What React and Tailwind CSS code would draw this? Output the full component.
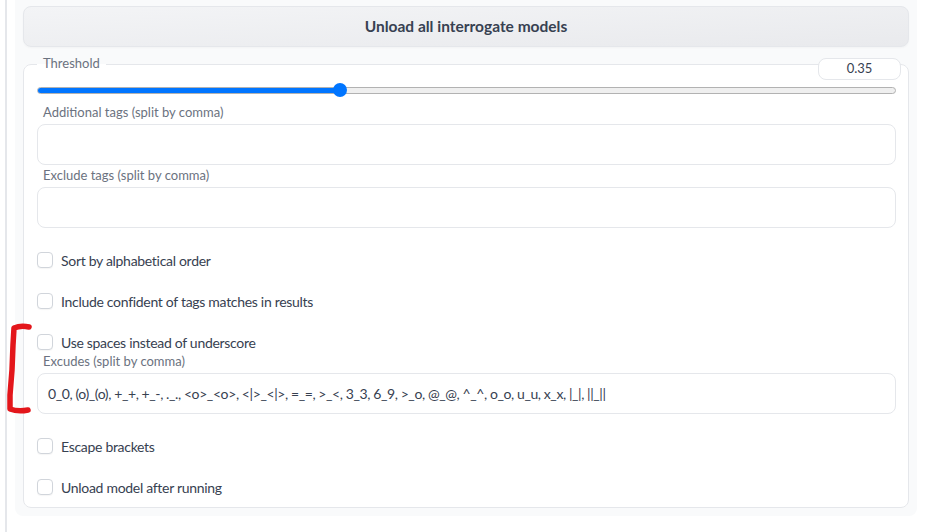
import { useState } from 'react';

const font = { fontFamily: 'Lato, "Noto Sans", sans-serif' };

const Checkbox = ({ label, checked, onChange, className = '' }) => (
    <label className={`flex items-center gap-2 h-[20px] cursor-pointer ${className}`}>
        <span
            onClick={onChange}
            className={`w-4 h-4 rounded-[4px] border flex-none shadow-[0_1px_1px_rgba(0,0,0,0.04)] ${checked ? 'bg-[#0075ff] border-[#0075ff]' : 'bg-white border-[#d1d5db]'}`}
        />
        <span className="text-[14px] tracking-[-0.3px] text-[#374151]">{label}</span>
    </label>
);

const Field = ({ label, value, className = '' }) => (
    <div className={className}>
        <div className="pl-[6px] h-[18px] leading-[18px] text-[13px] text-[#6b7280]">{label}</div>
        <div className="mt-[3px] h-[41px] rounded-lg border border-[#e5e7eb] bg-white px-[10px] flex items-center text-[14px] tracking-[-0.4px] text-[#374151] whitespace-nowrap overflow-hidden">
            {value}
        </div>
    </div>
);

const App = () => {
    const threshold = 0.35;
    const [checks, setChecks] = useState({ sort: false, conf: false, spaces: false, escape: false, unload: false });
    const toggle = (k) => setChecks(prev => ({ ...prev, [k]: !prev[k] }));

    // thumb center follows the native range math: r + (w - 2r) * value
    const fill = `calc(7px + (100% - 14px) * ${threshold})`;

    return (
        <div className="relative min-h-screen bg-white pl-[5px]" style={font}>
            <div className="min-h-screen border-l-2 border-[#e5e7eb] pl-[8px]">
                <div className="w-[902px] bg-[#f9fafb] rounded-b-lg px-2 pt-[6px] pb-[8px]">
                    <button className="w-full h-[41px] rounded-lg border border-[#e5e7eb] bg-linear-to-br from-[#f3f4f6] to-[#e9eaed] text-[15.5px] font-bold text-[#374151] shadow-[0_1px_2px_rgba(0,0,0,0.03)]">
                        Unload all interrogate models
                    </button>

                    <div className="relative mt-[8px]">
                        <fieldset className="rounded-lg border border-[#e5e7eb] bg-white pl-[13px] pr-[12px] pb-[10px]">
                            <legend className="px-[6px] h-[18px] leading-[17px] text-[13px] text-[#6b7280]">Threshold</legend>

                            {/* slider */}
                            <div className="relative mt-[10px] h-[14px] flex items-center">
                                <div className="relative w-full h-[7px] rounded-full bg-[#efefef] border border-[#b2b2b2] overflow-hidden">
                                    <div className="absolute left-0 top-0 bottom-0 bg-[#0075ff]" style={{ width: fill }} />
                                </div>
                                <div
                                    className="absolute top-0 w-[14px] h-[14px] rounded-full bg-[#0075ff] -translate-x-1/2"
                                    style={{ left: fill }}
                                />
                            </div>

                            <Field label="Additional tags (split by comma)" value="" className="mt-[6px]" />
                            <Field label="Exclude tags (split by comma)" value="" className="mt-px" />

                            <Checkbox label="Sort by alphabetical order" checked={checks.sort} onChange={() => toggle('sort')} className="mt-[22px]" />
                            <Checkbox label="Include confident of tags matches in results" checked={checks.conf} onChange={() => toggle('conf')} className="mt-[21px]" />
                            <Checkbox label="Use spaces instead of underscore" checked={checks.spaces} onChange={() => toggle('spaces')} className="mt-[21px]" />

                            <Field
                                label="Excudes (split by comma)"
                                value="0_0, (o)_(o), +_+, +_-, ._., <o>_<o>, <|>_<|>, =_=, >_<, 3_3, 6_9, >_o, @_@, ^_^, o_o, u_u, x_x, |_|, ||_||"
                            />

                            <Checkbox label="Escape brackets" checked={checks.escape} onChange={() => toggle('escape')} className="mt-[22px]" />
                            <Checkbox label="Unload model after running" checked={checks.unload} onChange={() => toggle('unload')} className="mt-[21px]" />
                        </fieldset>

                        <div className="absolute top-[3px] right-[8px] w-[83px] h-[22px] rounded-lg border border-[#e5e7eb] bg-white flex items-center justify-center text-[13px] text-[#374151]">
                            {threshold}
                        </div>
                    </div>
                </div>
            </div>

            {/* hand-drawn red bracket annotation */}
            <svg className="absolute left-0 top-[320px] pointer-events-none" width="40" height="100" viewBox="0 320 40 100">
                <path
                    d="M29 327 Q21 325 14 328 L13 345 L12 370 L10 395 L10 409 Q18 412 28 410"
                    fill="none"
                    stroke="#e3161b"
                    strokeWidth="5.5"
                    strokeLinecap="round"
                    strokeLinejoin="round"
                />
            </svg>
        </div>
    );
};

export default App;
